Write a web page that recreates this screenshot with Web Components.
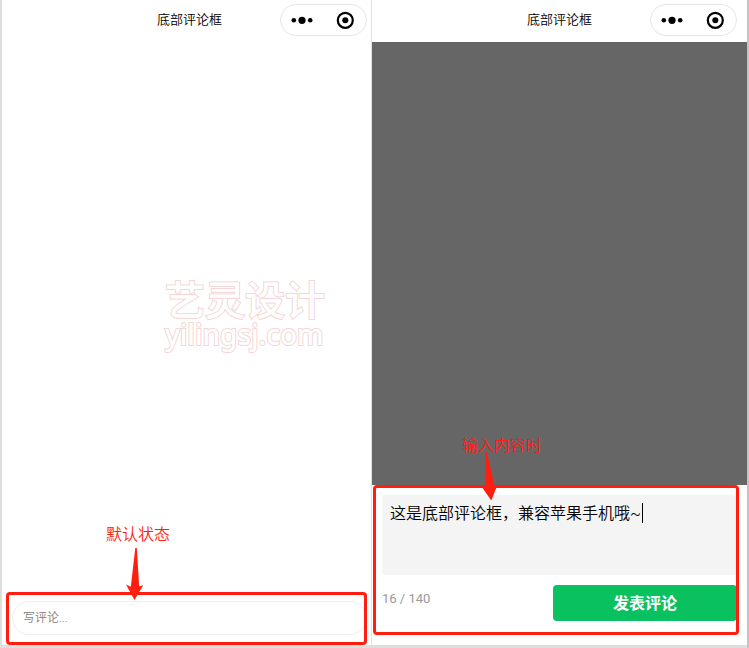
<!DOCTYPE html>
<html lang="zh-CN">
<head>
<meta charset="utf-8">
<meta name="viewport" content="width=device-width, initial-scale=1">
<title>底部评论框</title>
<style>
body {
    margin: 0;
    background-color: #dededa;
    font-family: Roboto, "Noto Sans CJK SC", sans-serif;
    font-size: 16px;
    color: #000;
}
</style>
</head>
<body>
<demo-stage>
    <phone-screen data-title="底部评论框">
        <water-mark>艺灵设计<span slot="site">yilingsj.com</span></water-mark>
        <comment-bar slot="bottom">
            <mark-frame data-arrow="long">默认状态</mark-frame>
        </comment-bar>
    </phone-screen>
    <phone-screen data-title="底部评论框" data-mask="on">
        <comment-sheet slot="bottom" data-max="140" data-count="16" data-text="这是底部评论框，兼容苹果手机哦~">
            <mark-frame data-arrow="short">输入内容时</mark-frame>
        </comment-sheet>
    </phone-screen>
</demo-stage>

<script>
function makeTemplate(html) {
    const template = document.createElement("template");
    template.innerHTML = html;
    return template;
}

const stageTemplate = makeTemplate(`
<style>
:host {
    display: flex;
    box-sizing: border-box;
    height: 100vh;
    padding: 0 2px 3px;
    background: linear-gradient(to left, #c4c4c4 2px, transparent 2px);
}

/* the second phone lies over the edge of the first one */
::slotted(phone-screen:last-child) {
    margin-left: -5px;
    box-shadow: -1px 0 #e0e0e0;
}
</style>
<slot></slot>
`);

class DemoStage extends HTMLElement {
    constructor() {
        super();
        this.attachShadow({mode: "open"});
        this.shadowRoot.appendChild(stageTemplate.content.cloneNode(true));
    }
}

const phoneTemplate = makeTemplate(`
<style>
:host {
    position: relative;
    display: flex;
    flex: 1 1 0;
    flex-flow: column nowrap;
    min-width: 0;
    background-color: #fff;
}

header {
    display: grid;
    grid-template-columns: 1fr auto 1fr;
    align-items: center;
    box-sizing: border-box;
    height: 42px;
    padding: 0 10px 2px;
}

h1 {
    grid-column: 2;
    margin: 0;
    font-size: 13px;
    font-weight: 350;
    line-height: 20px;
}

main {
    position: relative;
    flex: 1;
}

:host([data-mask="on"]) main {
    background-color: #666;
}
</style>
<header>
    <h1></h1>
    <menu-capsule></menu-capsule>
</header>
<main><slot></slot></main>
<slot name="bottom"></slot>
`);

class PhoneScreen extends HTMLElement {
    constructor() {
        super();
        this.attachShadow({mode: "open"});
        this.shadowRoot.appendChild(phoneTemplate.content.cloneNode(true));
        this.heading = this.shadowRoot.querySelector("h1");
    }

    connectedCallback() {
        this.heading.textContent = this.getAttribute("data-title");
    }
}

const capsuleTemplate = makeTemplate(`
<style>
:host {
    display: flex;
    justify-self: end;
    box-sizing: border-box;
    width: 87px;
    height: 32px;
    border: 1px solid #e5e5e5;
    border-radius: 16px;
    background-color: #fff;
}

button {
    display: flex;
    flex: 1;
    justify-content: center;
    align-items: center;
    padding: 0;
    border: 0;
    background: none;
}
</style>
<button type="button" aria-label="更多">
    <svg width="22" height="8" viewBox="0 0 22 8">
        <circle cx="2.8" cy="4.3" r="2.3"/>
        <circle cx="11" cy="4.3" r="3.6"/>
        <circle cx="19.2" cy="4.3" r="2.3"/>
    </svg>
</button>
<button type="button" aria-label="关闭">
    <svg width="18" height="18" viewBox="0 0 18 18">
        <circle cx="9.3" cy="9.3" r="7.5" fill="none" stroke="#000" stroke-width="2.2"/>
        <circle cx="9.3" cy="9.3" r="3"/>
    </svg>
</button>
`);

class MenuCapsule extends HTMLElement {
    constructor() {
        super();
        this.attachShadow({mode: "open"});
        this.shadowRoot.appendChild(capsuleTemplate.content.cloneNode(true));
    }
}

const waterTemplate = makeTemplate(`
<style>
:host {
    position: absolute;
    top: 240px;
    left: 163px;
    color: #fff;
    font-size: 40px;
    font-weight: 500;
    line-height: 40px;
    -webkit-text-stroke: 2px #f3d6d6;
    paint-order: stroke fill;
}

div {
    font-family: "Noto Sans", sans-serif;
    font-size: 28px;
    line-height: 24px;
}
</style>
<slot></slot>
<div><slot name="site"></slot></div>
`);

class WaterMark extends HTMLElement {
    constructor() {
        super();
        this.attachShadow({mode: "open"});
        this.shadowRoot.appendChild(waterTemplate.content.cloneNode(true));
    }
}

const barTemplate = makeTemplate(`
<style>
:host {
    position: relative;
    display: block;
    padding: 9px 10px 10px;
    --frame-inset: 0 10px 0 4px;
}

input {
    display: block;
    box-sizing: border-box;
    width: 100%;
    height: 34px;
    padding: 0 10px;
    border: 1px solid #eee;
    border-radius: 17px;
    outline: 0;
    background-color: #fff;
    font: 350 12px/20px Roboto, "Noto Sans CJK SC", sans-serif;
}

input::placeholder {
    color: #808080;
}
</style>
<input type="text" placeholder="写评论..." aria-label="写评论">
<slot></slot>
`);

class CommentBar extends HTMLElement {
    constructor() {
        super();
        this.attachShadow({mode: "open"});
        this.shadowRoot.appendChild(barTemplate.content.cloneNode(true));
    }
}

const sheetTemplate = makeTemplate(`
<style>
:host {
    position: relative;
    display: block;
    padding: 10px 10px 24px;
    --frame-inset: 0 8px 10px 1px;
}

.field {
    position: relative;
}

textarea {
    display: block;
    box-sizing: border-box;
    width: 100%;
    height: 80px;
    padding: 8px;
    border: 0;
    border-radius: 4px;
    outline: 0;
    resize: none;
    background-color: #f4f4f4;
    color: #000;
    font: 350 16px/22px Roboto, "Noto Sans CJK SC", sans-serif;
}

.caret {
    position: absolute;
    top: 8px;
    left: 260px;
    width: 1px;
    height: 20px;
    background-color: #000;
}

.actions {
    display: flex;
    justify-content: space-between;
    align-items: flex-start;
    margin-top: 10px;
}

output {
    color: #999;
    font-size: 13px;
    line-height: 28px;
}

button {
    width: 184px;
    height: 36px;
    padding: 0 0 2px;
    border: 0;
    border-radius: 4px;
    background-color: #0ac160;
    color: #fff;
    font: bold 16px/20px "Noto Sans CJK SC", sans-serif;
}
</style>
<div class="field">
    <textarea id="text" aria-label="评论内容"></textarea>
    <span class="caret"></span>
</div>
<div class="actions">
    <output for="text"></output>
    <button type="button">发表评论</button>
</div>
<slot></slot>
`);

class CommentSheet extends HTMLElement {
    constructor() {
        super();
        this.attachShadow({mode: "open"});
        this.shadowRoot.appendChild(sheetTemplate.content.cloneNode(true));

        this.area = this.shadowRoot.querySelector("textarea");
        this.counter = this.shadowRoot.querySelector("output");
        this.caret = this.shadowRoot.querySelector(".caret");
    }

    connectedCallback() {
        this.area.value = this.getAttribute("data-text") || "";
        this.area.maxLength = this.getAttribute("data-max");
        this.render(this.getAttribute("data-count"));

        //the browser's own caret takes over as soon as the field is used
        this.area.addEventListener("focus", () => this.caret.remove());
        this.area.addEventListener("input", () => this.render(this.area.value.length));
    }

    render(count) {
        this.counter.textContent = `${count} / ${this.getAttribute("data-max")}`;
    }
}

const frameTemplate = makeTemplate(`
<style>
:host {
    position: absolute;
    inset: var(--frame-inset, 0);
    box-sizing: border-box;
    border: 3px solid #ff1e10;
    border-radius: 4px;
    pointer-events: none;
    color: #ff1e10;
    font-weight: 350;
    line-height: 20px;
}

.label {
    position: absolute;
    bottom: 100%;
    left: 97px;
    margin-bottom: 50px;
    white-space: nowrap;
}

svg {
    position: absolute;
    top: -47px;
    left: 117px;
    fill: #ff1e10;
}

.short {
    display: none;
}

:host([data-arrow="short"]) .label {
    left: 86px;
    margin-bottom: 32px;
}

:host([data-arrow="short"]) svg {
    top: -36px;
    left: 106px;
}

:host([data-arrow="short"]) .short {
    display: block;
}

:host([data-arrow="short"]) .long {
    display: none;
}
</style>
<span class="label"><slot></slot></span>
<svg class="long" width="18" height="53" viewBox="0 0 18 53">
    <path d="M9.3 0h1.5l2.4 38.5 4-1.2L8.5 52 0 36.5l4.8 2.2z"/>
</svg>
<svg class="short" width="16" height="49" viewBox="0 0 16 49">
    <path d="M3.6 0h1.2l7.6 33.5 3.2-1L9.3 48.5 .5 36l2.9-1z"/>
</svg>
`);

class MarkFrame extends HTMLElement {
    constructor() {
        super();
        this.attachShadow({mode: "open"});
        this.shadowRoot.appendChild(frameTemplate.content.cloneNode(true));
    }
}

customElements.define("demo-stage", DemoStage);
customElements.define("phone-screen", PhoneScreen);
customElements.define("menu-capsule", MenuCapsule);
customElements.define("water-mark", WaterMark);
customElements.define("comment-bar", CommentBar);
customElements.define("comment-sheet", CommentSheet);
customElements.define("mark-frame", MarkFrame);
</script>
</body>
</html>
